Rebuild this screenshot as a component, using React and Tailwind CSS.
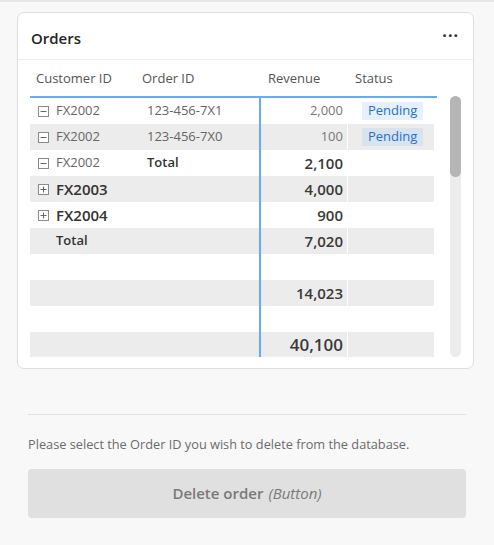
import React from 'react';

const rows = [
  { cust: 'FX2002', order: '123-456-7X1', rev: '2,000', status: 'Pending', icon: 'minus' },
  { cust: 'FX2002', order: '123-456-7X0', rev: '100', status: 'Pending', icon: 'minus', gray: true },
  { cust: 'FX2002', order: 'Total', rev: '2,100', icon: 'minus', boldOrder: true, boldRev: true },
  { cust: 'FX2003', rev: '4,000', icon: 'plus', boldCust: true, boldRev: true, gray: true },
  { cust: 'FX2004', rev: '900', icon: 'plus', boldCust: true, boldRev: true },
  { cust: 'Total', rev: '7,020', totalRow: true, boldRev: true, gray: true },
  {},
  { rev: '14,023', boldRev: true, gray: true },
  {},
  { rev: '40,100', bigRev: true, gray: true, last: true },
];

// small square toggle drawn like the matrix expand/collapse box
const Toggle = ({ type }) => (
  <svg width="11" height="11" viewBox="0 0 11 11" className="shrink-0">
    <rect x="0.5" y="0.5" width="10" height="10" fill="white" stroke="#8a8a8a" />
    <line x1="2.5" y1="5.5" x2="8.5" y2="5.5" stroke="#666" />
    {type === 'plus' && <line x1="5.5" y1="2.5" x2="5.5" y2="8.5" stroke="#666" />}
  </svg>
);

const Row = ({ r }) => {
  const bg = r.gray ? 'bg-[#ececec]' : 'bg-white';
  return (
    <div className={`flex ${r.last ? 'h-[25px]' : 'h-[26px]'}`}>
      <div className={`w-[231px] flex items-center ${bg} border-r-2 border-[#6aaaf0]`}>
        <div className="w-[117px] flex items-center pl-2 gap-[7px]">
          {r.icon ? <Toggle type={r.icon} /> : <span className="w-[11px]" />}
          {r.cust && (
            <span
              className={
                r.boldCust
                  ? 'text-[15px] font-semibold text-[#333]'
                  : r.totalRow
                  ? 'text-[13px] font-semibold text-[#333]'
                  : 'text-[13px] text-[#666]'
              }
            >
              {r.cust}
            </span>
          )}
        </div>
        {r.order && (
          <span className={r.boldOrder ? 'text-[13px] font-semibold text-[#333]' : 'text-[13px] text-[#666]'}>
            {r.order}
          </span>
        )}
      </div>
      <div className={`w-[86px] flex items-center justify-end pr-[4px] ${bg}`}>
        {r.rev && (
          <span
            className={
              r.bigRev
                ? 'text-[17px] font-semibold text-[#3a3a3a]'
                : r.boldRev
                ? 'text-[15px] font-semibold text-[#3a3a3a]'
                : 'text-[13px] text-[#777]'
            }
          >
            {r.rev}
          </span>
        )}
      </div>
      <div className={`ml-px w-[86px] flex items-center pl-[14px] ${bg}`}>
        {r.status && (
          <span
            className={`h-[18px] px-[6px] flex items-center text-[13px] text-[#1f6fd1] ${
              r.gray ? 'bg-[#d8e3ef]' : 'bg-[#e6f1fc]'
            }`}
          >
            {r.status}
          </span>
        )}
      </div>
    </div>
  );
};

const App = () => {
  return (
    <div
      className="w-[494px] h-[545px] bg-[#f8f8f8] border-t-2 border-[#e6e6e6] overflow-hidden"
      style={{ fontFamily: '"Open Sans", "Noto Sans", sans-serif' }}
    >
      <div className="ml-[17px] mt-[10px] w-[457px] h-[357px] bg-white border border-[#dedede] rounded-[7px] flex flex-col">
        {/* card header */}
        <div className="h-[47px] flex items-center justify-between pl-[13px] pr-[14px] pt-[5px] border-b border-[#efefef]">
          <span className="text-[15px] font-semibold text-[#252525]">Orders</span>
          <span className="text-[16px] font-bold text-[#333] leading-none tracking-[1px] -mt-2">···</span>
        </div>

        {/* column headers */}
        <div className="h-[36px] flex items-center pt-[2px] text-[13px] text-[#555]">
          <span className="ml-[18px] w-[106px]">Customer ID</span>
          <span className="w-[126px]">Order ID</span>
          <span className="w-[87px]">Revenue</span>
          <span>Status</span>
        </div>

        {/* body */}
        <div className="flex">
          <div className="ml-[12px] w-[407px] border-t-2 border-[#6aaaf0]">
            {rows.map((r, i) => (
              <Row key={i} r={r} />
            ))}
          </div>
          <div className="ml-[13px] w-[11px] h-[261px] rounded-full bg-[#ececec]">
            <div className="h-[81px] rounded-full bg-[#b5b5b5]" />
          </div>
        </div>
      </div>

      <div className="mx-[28px] mt-[45px] border-t border-[#e2e2e2]" />

      <p className="mx-[28px] mt-[20px] text-[12.75px] text-[#6b6b6b]">
        Please select the Order ID you wish to delete from the database.
      </p>

      <button className="mx-[28px] mt-[15px] w-[438px] h-[49px] rounded-[4px] bg-[#e0e0e0] flex items-center justify-center text-[15px] text-[#7a7a7a]">
        <span className="font-semibold">Delete order</span>
        <span className="italic ml-[5px]">(Button)</span>
      </button>
    </div>
  );
};

export default App;
